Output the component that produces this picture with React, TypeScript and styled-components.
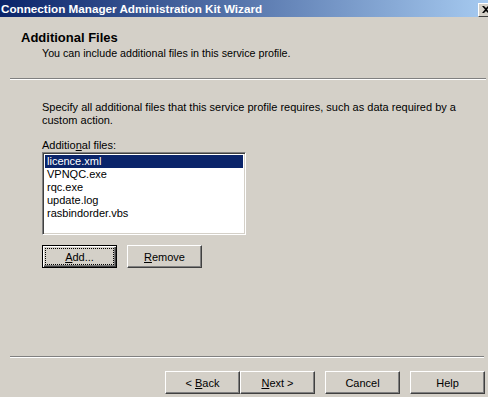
import React from "react";
import styled, { createGlobalStyle } from "styled-components";

const GlobalStyle = createGlobalStyle`
  html, body {
    margin: 0;
    padding: 0;
    background: #d4d0c8;
  }
  * {
    box-sizing: border-box;
  }
`;

const files = ["licence.xml", "VPNQC.exe", "rqc.exe", "update.log", "rasbindorder.vbs"];

const App = () => {
  return (
    <Window>
      <GlobalStyle />
      <TitleBar>
        <TitleText>Connection Manager Administration Kit Wizard</TitleText>
        <CloseButton>
          <svg width="8" height="7" viewBox="0 0 8 7">
            <path d="M0 0h2l2 2 2-2h2L5 3.5 8 7H6L4 5 2 7H0l3-3.5z" fill="#000" />
          </svg>
        </CloseButton>
      </TitleBar>

      <Header>
        <Heading>Additional Files</Heading>
        <SubHeading>You can include additional files in this service profile.</SubHeading>
      </Header>
      <Separator />

      <Content>
        <Intro>
          Specify all additional files that this service profile requires, such as data required by a
          custom action.
        </Intro>
        <Label>
          Additio<u>n</u>al files:
        </Label>
        <ListBox>
          {files.map((f, i) => (
            <ListItem key={f} $selected={i === 0}>
              {f}
            </ListItem>
          ))}
        </ListBox>
        <ActionRow>
          <Button $default>
            <Focus>
              <Caption>
                <u>A</u>dd...
              </Caption>
            </Focus>
          </Button>
          <Button>
            <Caption>
              <u>R</u>emove
            </Caption>
          </Button>
        </ActionRow>
      </Content>

      <Separator $bottom />
      <Footer>
        <WizardGroup>
          <Button>
            <Caption>
              &lt; <u>B</u>ack
            </Caption>
          </Button>
          <Button>
            <Caption>
              <u>N</u>ext &gt;
            </Caption>
          </Button>
        </WizardGroup>
        <Button>
          <Caption>Cancel</Caption>
        </Button>
        <Button>
          <Caption>Help</Caption>
        </Button>
      </Footer>
    </Window>
  );
};

const Window = styled.div`
  width: 488px;
  height: 397px;
  overflow: hidden;
  display: flex;
  flex-direction: column;
  background: #d4d0c8;
  font-family: Tahoma, "Liberation Sans", Arial, sans-serif;
  font-size: 11px;
  color: #000;
`;

const TitleBar = styled.div`
  height: 17px;
  flex-shrink: 0;
  display: flex;
  align-items: center;
  padding-left: 1px;
  background: linear-gradient(to right, #0a246a, #a6caf0);
`;

const TitleText = styled.div`
  flex: 1;
  color: #fff;
  font-weight: bold;
  font-size: 11.7px;
  white-space: nowrap;
`;

const CloseButton = styled.div`
  width: 16px;
  height: 14px;
  margin-right: -6px;
  margin-top: 2px;
  flex-shrink: 0;
  display: flex;
  align-items: center;
  justify-content: center;
  background: #d4d0c8;
  border-top: 1px solid #fff;
  border-left: 1px solid #fff;
  border-right: 1px solid #404040;
  border-bottom: 1px solid #404040;
`;

const Header = styled.div`
  padding: 13px 0 0 21px;
  height: 61px;
`;

const Heading = styled.div`
  font-weight: bold;
  font-size: 13px;
  line-height: 16px;
`;

const SubHeading = styled.div`
  padding-left: 21px;
  line-height: 13px;
  margin-top: 1px;
  font-size: 10.7px;
`;

const Separator = styled.div<{ $bottom?: boolean }>`
  height: 2px;
  flex-shrink: 0;
  margin-left: 10px;
  margin-right: ${(p) => (p.$bottom ? "4px" : "2px")};
  border-top: 1px solid #808080;
  border-bottom: 1px solid #fff;
`;

const Content = styled.div`
  flex: 1;
  padding: 21px 0 0 42px;
`;

const Intro = styled.div`
  width: 430px;
  line-height: 13px;
`;

const Label = styled.div`
  margin-top: 12px;
  line-height: 13px;
`;

const ListBox = styled.div`
  width: 204px;
  height: 83px;
  background: #fff;
  border-top: 1px solid #808080;
  border-left: 1px solid #808080;
  border-right: 1px solid #fff;
  border-bottom: 1px solid #fff;
  box-shadow: inset 1px 1px 0 #404040, inset -1px -1px 0 #d4d0c8;
  padding: 2px;
`;

const ListItem = styled.div<{ $selected?: boolean }>`
  height: 13px;
  line-height: 13px;
  padding-left: 2px;
  white-space: nowrap;
  background: ${(p) => (p.$selected ? "#0a246a" : "transparent")};
  color: ${(p) => (p.$selected ? "#fff" : "#000")};
`;

const ActionRow = styled.div`
  display: flex;
  gap: 10px;
  margin-top: 10px;
`;

const Button = styled.div<{ $default?: boolean }>`
  width: 75px;
  height: 23px;
  display: flex;
  align-items: center;
  justify-content: center;
  background: #d4d0c8;
  white-space: nowrap;
  border-top: 1px solid ${(p) => (p.$default ? "#000" : "#fff")};
  border-left: 1px solid ${(p) => (p.$default ? "#000" : "#fff")};
  border-right: 1px solid ${(p) => (p.$default ? "#000" : "#404040")};
  border-bottom: 1px solid ${(p) => (p.$default ? "#000" : "#404040")};
  box-shadow: ${(p) =>
    p.$default
      ? "inset 1px 1px 0 #fff, inset -1px -1px 0 #404040, inset -2px -2px 0 #808080"
      : "inset -1px -1px 0 #808080"};
`;

const Caption = styled.span`
  white-space: pre;
`;

const Focus = styled.div`
  width: 67px;
  height: 15px;
  display: flex;
  align-items: center;
  justify-content: center;
  outline: 1px dotted #000;
  outline-offset: 0;
`;

const Footer = styled.div`
  height: 39px;
  flex-shrink: 0;
  display: flex;
  align-items: flex-start;
  justify-content: flex-end;
  gap: 10px;
  padding: 13px 3px 0 0;
`;

const WizardGroup = styled.div`
  display: flex;
`;

export default App;
